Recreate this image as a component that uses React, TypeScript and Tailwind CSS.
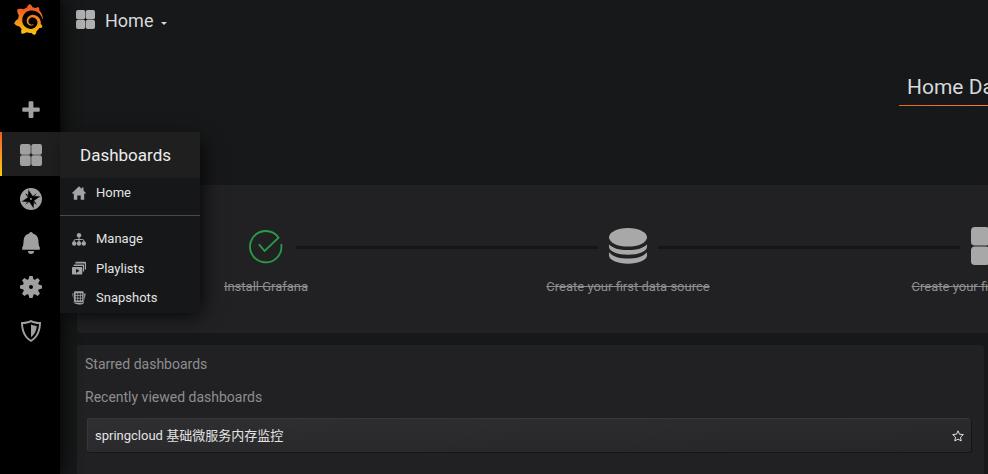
import React from "react";
import { SiGrafana } from "react-icons/si";

const Squares = ({ className }: { className: string }) => (
  <svg viewBox="0 0 22 22" className={className} fill="currentColor">
    <rect x="0" y="0" width="10.700" height="10.700" rx="2.200" />
    <rect x="11.300" y="0" width="10.700" height="10.700" rx="2.200" />
    <rect x="0" y="11.300" width="10.700" height="10.700" rx="2.200" />
    <rect x="11.300" y="11.300" width="10.700" height="10.700" rx="2.200" />
  </svg>
);

const Plus = () => (
  <svg viewBox="0 0 22 22" className="size-[22px]" fill="currentColor">
    <path d="M9.600 2.200h2.800a1 1 0 0 1 1 1v5.300h5.300a1 1 0 0 1 1 1v2.200a1 1 0 0 1-1 1h-5.300v5.300a1 1 0 0 1-1 1H9.600a1 1 0 0 1-1-1v-5.300H3.300a1 1 0 0 1-1-1V9.500a1 1 0 0 1 1-1h5.300V3.200a1 1 0 0 1 1-1z" />
  </svg>
);

const Compass = () => (
  <svg viewBox="0 0 22 22" className="size-[22px]">
    <circle cx="11" cy="11" r="11" fill="currentColor" />
    <path fill="#000" d="M5.200 5.200 11.400 9 16.800 5.200 13 10.600 16.800 16.800 10.600 13 5.200 16.800 9 11.400z" />
    <path fill="#000" stroke="currentColor" strokeWidth="0.400" d="M8.300 1.200 12.700 7.700 20.800 8.300 14.300 12.700 13.700 20.800 9.300 14.300 1.200 13.700 7.700 9.300z" />
    <circle cx="11" cy="11" r="0.900" fill="currentColor" />
  </svg>
);

const Bell = () => (
  <svg viewBox="0 0 22 22" className="size-[22px]" fill="currentColor">
    <path d="M11 0a1.900 1.900 0 0 1 1.900 1.500c3.500.8 5.300 3.500 5.500 7 .2 3.500.300 5.500 1.400 6.700v2.500H2.200v-2.500c1.100-1.200 1.200-3.200 1.400-6.700.2-3.500 2-6.200 5.500-7A1.900 1.900 0 0 1 11 0z" />
    <path d="M8 18.900h6a3 3 0 0 1-6 0z" />
  </svg>
);

const Gear = () => (
  <svg viewBox="0 0 22 22" className="size-[22px]" fill="currentColor">
    <g id="teeth">
      <path d="M9.400 0h3.200l1.200 4.500v13L12.600 22H9.400l-1.200-4.500v-13z" />
      <path d="M9.400 0h3.200l1.200 4.500v13L12.600 22H9.400l-1.200-4.500v-13z" transform="rotate(45 11 11)" />
      <path d="M9.400 0h3.200l1.200 4.500v13L12.600 22H9.400l-1.200-4.500v-13z" transform="rotate(90 11 11)" />
      <path d="M9.400 0h3.200l1.200 4.500v13L12.600 22H9.400l-1.200-4.500v-13z" transform="rotate(135 11 11)" />
    </g>
    <circle cx="11" cy="11" r="8.100" />
    <circle cx="11" cy="11" r="2" fill="#000" />
  </svg>
);

const Shield = () => (
  <svg viewBox="0 0 22 22" className="size-[22px]" fill="currentColor">
    <path fillRule="evenodd" d="M11 0c3 1.500 6.500 2 10 2-.1 9.300-2.900 16-10 20C3.900 18 1.100 11.300 1 2c3.500 0 7-.5 10-2zm0 2.200C8.500 3.300 5.800 3.900 3 4c.4 7.300 2.800 12.400 8 15.700 5.200-3.300 7.600-8.400 8-15.700-2.800-.1-5.500-.7-8-1.800z" />
    <path d="M11 4.600c2 .8 3.700 1.200 5.800 1.400-.5 5-2.200 8.700-5.800 11.200z" />
  </svg>
);

const House = () => (
  <svg viewBox="0 0 14 14" className="size-[14px]" fill="currentColor">
    <path d="M7 .3 9.800 3V1.500h1.700v3.100L14 7.100l-1 .9-.8-.7v6.400H8.700V9.600H5.300v4.100H1.800V7.300L1 8l-1-.9z" />
  </svg>
);

const Sitemap = () => (
  <svg viewBox="0 0 14 14" className="size-[14px]" fill="currentColor">
    <path d="M7 4v6M2 11V9.200Q2 7.500 3.500 7.500h7Q12 7.500 12 9.200V11" fill="none" stroke="currentColor" />
    <circle cx="7" cy="3.200" r="2.200" />
    <circle cx="2.200" cy="11.500" r="2.200" />
    <circle cx="7" cy="11.500" r="2.200" />
    <circle cx="11.800" cy="11.500" r="2.200" />
  </svg>
);

const Playlist = () => (
  <svg viewBox="0 0 14 14" className="size-[14px]" fill="currentColor">
    <path d="M4.300.7H13a1 1 0 0 1 1 1v6.800h-1.200V2.400H3.300v-.7a1 1 0 0 1 1-1z" />
    <path d="M2.600 3.400h8.500a1 1 0 0 1 1 1v6.100h-1.200V5.100H1.600v-.7a1 1 0 0 1 1-1z" />
    <path fillRule="evenodd" d="M1 6h8.300a1 1 0 0 1 1 1v5.400a1 1 0 0 1-1 1H1a1 1 0 0 1-1-1V7a1 1 0 0 1 1-1zm3 1.700v4.200l3.500-2.100z" />
  </svg>
);

const Snapshot = () => (
  <svg viewBox="0 0 14 14" className="size-[14px]" fill="currentColor">
    <path d="M.3 2.500 1.300 2v8l1 1.700 6.700.3-1.700 1.700-4.500-1.200-1-.6zM12.200 2.300l1.500.4-2 9.600-2.500 1.500-2-1 3.700-1.100 1.300-1.500z" />
    <path fillRule="evenodd" d="M3 .3h7.600a1 1 0 0 1 1 1v8.900a1 1 0 0 1-1 1H3a1 1 0 0 1-1-1V1.300a1 1 0 0 1 1-1zM3.700 2.200v2h1.700v-2zm2.500 0v2h1.700v-2zm2.500 0v2h1.500v-2zM3.700 5v1.800h1.700V5zm2.500 0v1.800h1.700V5zm2.500 0v1.800h1.500V5zM3.700 7.600v1.800h1.700V7.600zm2.500 0v1.800h1.700V7.600zm2.500 0v1.800h1.500V7.600z" />
  </svg>
);

const Check = () => (
  <svg viewBox="0 0 34 34" className="mt-[2px] size-[34px]" fill="none" stroke="#299c46" strokeWidth="1.800">
    <path d="M32.300 14.700A15.700 15.700 0 1 1 29.600 7.700L15.600 21 10.400 14.800" strokeLinecap="round" />
  </svg>
);

const Database = () => (
  <svg viewBox="0 0 38 36" className="h-9 w-[38px]" fill="currentColor">
    <ellipse cx="19" cy="9.300" rx="19" ry="9.300" />
    <path d="M0 16.200c3.500 4 10 5.800 19 5.800s15.500-1.800 19-5.800v2.600c0 4.600-8.500 8-19 8S0 23.400 0 18.800z" />
    <path d="M0 24.300c3.500 4.300 10 6.200 19 6.200s15.500-1.900 19-6.200v3.200c0 4.600-8.500 8.200-19 8.200S0 32.100 0 27.500z" />
  </svg>
);

const Star = () => (
  <svg viewBox="0 0 12 12" className="size-3" fill="none" stroke="currentColor" strokeLinejoin="round">
    <path d="M6 .8 7.500 4.200 11.300 4.600 8.500 7.200 9.200 10.900 6 9.100 2.800 10.900 3.500 7.200.7 4.600 4.500 4.200z" />
  </svg>
);

const MenuRow = ({ icon, label }: { icon: React.ReactNode; label: string }) => (
  <div className="flex h-[29.5px] items-center gap-[10px] pl-3 text-[13px] text-[#e3e3e3]">
    <span className="text-[#a5a5a5]">{icon}</span>
    {label}
  </div>
);

const Step = ({ icon, label, line = true }: { icon: React.ReactNode; label: string; line?: boolean }) => (
  <div className="relative flex w-[362px] shrink-0 flex-col items-center text-[#a8a8a8]">
    <div className="flex h-[38px] items-center">{icon}</div>
    <div className="mt-[12px] text-[13px] leading-5 whitespace-nowrap text-[#8e8e8e] line-through">{label}</div>
    {line && <div className="absolute top-[19px] left-[211px] h-[3px] w-[302px] bg-[#161618]" />}
  </div>
);

export default function App() {
  return (
    <div className="flex h-[474px] w-[988px] overflow-hidden bg-[#171819] font-['Roboto','Noto_Sans_CJK_SC',sans-serif] text-[13px] text-[#d8d9da]">
      <aside className="relative z-10 w-[60px] shrink-0 bg-black text-[#a0a0a0] shadow-[0_0_20px_#000]">
        <div className="flex h-[88px] justify-center pt-1 pr-1">
          <svg className="absolute size-0">
            <linearGradient id="flame" x1="0" y1="0" x2="0" y2="1">
              <stop offset="0.15" stopColor="#f05a28" />
              <stop offset="1" stopColor="#fbca0a" />
            </linearGradient>
          </svg>
          <SiGrafana className="h-[31px] w-[31px] fill-[url(#flame)]" />
        </div>
        <nav>
          <div className="flex h-11 items-center justify-center pl-[2px]"><Plus /></div>
          <div className="relative flex h-11 items-center justify-center bg-[#1f1f20] pt-[2px] pl-[2px]">
            <div className="absolute inset-y-0 left-0 w-[2px] bg-linear-to-b from-[#f05a28] to-[#fbca0a]" />
            <Squares className="size-[22px]" />
            <div className="absolute top-0 left-[60px] h-[181px] w-[140px] bg-[#161719] shadow-[5px_5px_20px_-5px_#000]">
              <div className="flex h-[46px] items-center bg-[#1f1f20] pt-[2px] pl-5 text-[17px] text-[#ececec]">Dashboards</div>
              <MenuRow icon={<House />} label="Home" />
              <div className="mt-[7px] mb-[8.500px] h-px bg-[#48494b]" />
              <MenuRow icon={<Sitemap />} label="Manage" />
              <MenuRow icon={<Playlist />} label="Playlists" />
              <MenuRow icon={<Snapshot />} label="Snapshots" />
            </div>
          </div>
          <div className="flex h-11 items-center justify-center pt-[2px] pl-[2px]"><Compass /></div>
          <div className="flex h-11 items-center justify-center pt-[2px] pl-[2px]"><Bell /></div>
          <div className="flex h-11 items-center justify-center pt-[2px] pl-[2px]"><Gear /></div>
          <div className="flex h-11 items-center justify-center pt-[2px] pl-[2px]"><Shield /></div>
        </nav>
      </aside>
      <main className="w-[928px] shrink-0 overflow-hidden">
        <header className="flex h-10 items-center pl-4 text-[18px]">
          <Squares className="mb-[1px] size-[19px] text-[#b0b0b0]" />
          <span className="ml-[10px]">Home</span>
          <span className="mt-[7px] ml-2 border-x-[3px] border-t-[3px] border-x-transparent border-t-[#d8d9da]" />
        </header>
        <div className="ml-[839px] flex h-[66px] w-[177px] flex-col justify-end">
          <div className="pb-[5px] pl-2 text-[21px] leading-[26px] whitespace-nowrap">Home Dashboard</div>
          <div className="h-px bg-linear-to-r from-[#eb6321] to-[#f9934e]" />
        </div>
        <section className="mt-[79px] ml-[17px] flex h-[148px] w-[1086px] rounded-[3px] bg-[#212124] pt-[42px] pl-2">
          <Step icon={<Check />} label="Install Grafana" />
          <Step icon={<Database />} label="Create your first data source" />
          <Step icon={<Squares className="size-[38px]" />} label="Create your first dashboard" line={false} />
        </section>
        <section className="mt-3 ml-[17px] h-[150px] w-[907px] rounded-[3px] bg-[#212124] px-2 pt-[9px] text-sm leading-5 text-[#8e8e8e]">
          <h6>Starred dashboards</h6>
          <h6 className="mt-[13px]">Recently viewed dashboards</h6>
          <div className="mt-[12px] ml-[3px] flex h-[33px] w-[883px] items-center justify-between rounded-[2px] bg-linear-to-br from-[#2f2f32] to-[#262628] pr-[7px] pl-[7px] text-[13px] text-[#e3e3e3] shadow-[-1px_-1px_0_#37373a,1px_1px_0_#151517]">
            <span>springcloud 基础微服务内存监控</span>
            <Star />
          </div>
        </section>
      </main>
    </div>
  );
}
